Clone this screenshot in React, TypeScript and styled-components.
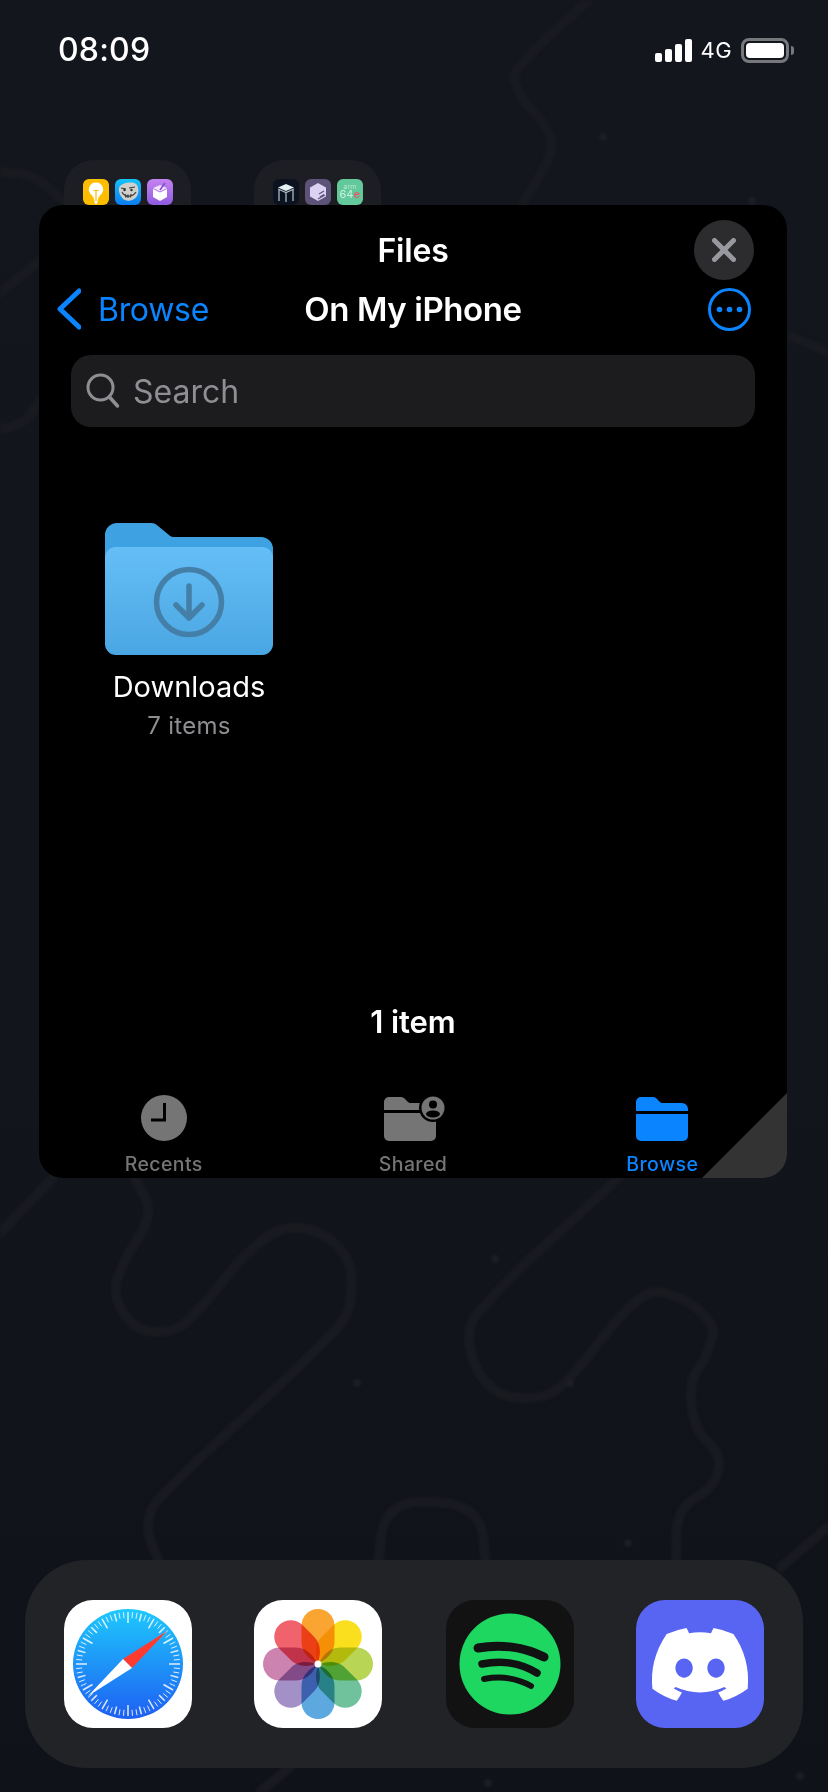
import React from "react";
import styled, { createGlobalStyle } from "styled-components";

const Global = createGlobalStyle`
  html, body { margin: 0; padding: 0; background: #12141b; }
  * { box-sizing: border-box; }
`;

const FONT = `Inter, "Noto Sans", "Liberation Sans", sans-serif`;
const BLUE = "#0a84ff";

const Page = styled.div`
  position: relative;
  width: 828px;
  height: 1792px;
  overflow: hidden;
  display: flex;
  flex-direction: column;
  font-family: ${FONT};
  color: #fff;
  background: linear-gradient(180deg, #14161e 0%, #13151d 60%, #101219 100%);
`;
const WallpaperArt = styled.svg`
  position: absolute;
  inset: 0;
  width: 828px;
  height: 1792px;
  filter: blur(1px);
`;
const StatusBar = styled.div`
  position: relative;
  height: 160px;
  padding: 32px 39px 0 58px;
  display: flex;
  justify-content: space-between;
  align-items: flex-start;
`;
const Time = styled.div`
  font-size: 32px;
  line-height: 36px;
  font-weight: 500;
  letter-spacing: 0.2px;
`;
const StatusRight = styled.div`
  display: flex;
  align-items: center;
  height: 36px;
`;
const Network = styled.span`
  font-size: 22px;
  font-weight: 400;
  margin: 0 9px 0 9px;
  letter-spacing: 0.4px;
`;
const FolderRow = styled.div`
  position: relative;
  height: 45px;
  overflow: hidden;
  padding-left: 64px;
  display: flex;
  gap: 63px;
`;
const HomeFolder = styled.div`
  width: 127px;
  height: 128px;
  border-radius: 30px;
  background: #1c1e23;
  padding: 19px 19px 0;
  display: flex;
  gap: 6px;
  align-items: flex-start;
`;
const MiniIcon = styled.svg`
  width: 26px;
  height: 26px;
  border-radius: 6px;
  flex: none;
`;
const Card = styled.div`
  position: relative;
  margin: 0 41px 0 39px;
  height: 973px;
  background: #000;
  border-radius: 24px;
  overflow: hidden;
  display: flex;
  flex-direction: column;
`;
const TitleRow = styled.div`
  display: grid;
  grid-template-columns: 1fr auto 1fr;
  align-items: center;
  padding: 15px 33px 0;
`;
const Title = styled.div`
  font-size: 32px;
  font-weight: 600;
  letter-spacing: -0.2px;
`;
const CloseButton = styled.div`
  grid-column: 3;
  justify-self: end;
  width: 60px;
  height: 60px;
  border-radius: 50%;
  background: #2c2c2e;
  display: flex;
  align-items: center;
  justify-content: center;
`;
const NavRow = styled.div`
  display: grid;
  grid-template-columns: 1fr auto 1fr;
  align-items: center;
  height: 44px;
  margin-top: 7px;
  padding: 0 36px;
`;
const BackLink = styled.div`
  display: flex;
  align-items: center;
  gap: 17px;
  margin-left: -18px;
  color: ${BLUE};
  font-size: 32px;
  letter-spacing: -0.3px;
`;
const NavTitle = styled.div`
  font-size: 33px;
  font-weight: 600;
  letter-spacing: -0.4px;
`;
const MoreWrap = styled.div`
  justify-self: end;
  display: flex;
`;
const SearchBar = styled.div`
  margin: 24px 32px 0 32px;
  height: 72px;
  border-radius: 20px;
  background: #1c1c1e;
  display: flex;
  align-items: center;
  gap: 13px;
  padding-left: 15px;
  color: #8e8e93;
  font-size: 32px;
`;
const FileItem = styled.div`
  width: 220px;
  margin: 96px 0 0 40px;
  display: flex;
  flex-direction: column;
  align-items: center;
`;
const FileName = styled.div`
  margin-top: 14px;
  font-size: 29px;
  line-height: 36px;
  letter-spacing: 0;
`;
const FileMeta = styled.div`
  margin-top: 5px;
  font-size: 24px;
  line-height: 32px;
  color: #8e8e93;
  letter-spacing: 0.3px;
`;
const ItemCount = styled.div`
  margin-top: auto;
  text-align: center;
  font-size: 31px;
  line-height: 36px;
  font-weight: 600;
  letter-spacing: -0.1px;
`;
const TabBar = styled.div`
  display: grid;
  grid-template-columns: repeat(3, 1fr);
  margin-top: 55px;
  height: 83px;
`;
const Tab = styled.div<{ $active?: boolean }>`
  display: flex;
  flex-direction: column;
  align-items: center;
  color: ${(p) => (p.$active ? BLUE : "#757575")};
`;
const TabIcon = styled.div`
  height: 46px;
  display: flex;
  align-items: center;
  justify-content: center;
`;
const SharedGlyph = styled.svg`
  margin-left: 4px;
`;
const TabLabel = styled.div`
  margin-top: 11px;
  font-size: 19.5px;
  line-height: 24px;
  font-weight: 500;
  letter-spacing: 0.4px;
`;
const ResizeCorner = styled.div`
  position: absolute;
  right: 0;
  bottom: 0;
  width: 85px;
  height: 85px;
  background: #333;
  clip-path: polygon(100% 0, 100% 100%, 0 100%);
`;
const Dock = styled.div`
  position: relative;
  margin: auto 25px 24px;
  height: 208px;
  border-radius: 62px;
  background: #222327;
  display: grid;
  grid-template-columns: 190px 192px 190px 128px;
  align-items: center;
  padding: 0 39px;
`;
const AppIcon = styled.svg`
  width: 128px;
  height: 128px;
  border-radius: 29px;
  flex: none;
`;
const Petal = styled.path`
  mix-blend-mode: multiply;
`;
const Art = styled.g`
  isolation: isolate;
`;
const SignalBars = styled.div`
  display: flex;
  align-items: flex-end;
  gap: 3px;
  height: 23px;
`;
const SignalBar = styled.span<{ $h: number }>`
  width: 7px;
  height: ${(p) => p.$h}px;
  border-radius: 2px;
  background: #fff;
`;
const Battery = styled.div`
  position: relative;
  width: 48px;
  height: 25px;
  border: 3px solid #77787c;
  border-radius: 8px;
  padding: 2px;
  &::after {
    content: "";
    position: absolute;
    right: -8px;
    top: 5px;
    width: 3px;
    height: 9px;
    background: #77787c;
    border-radius: 0 3px 3px 0;
  }
`;
const BatteryFill = styled.div`
  width: 100%;
  height: 100%;
  background: #fff;
  border-radius: 4px;
`;

type P = [number, number];
function smooth(pts: P[]): string {
  const tangent = (a: P, b: P): P => {
    const dx = b[0] - a[0];
    const dy = b[1] - a[1];
    const l = Math.hypot(dx, dy) || 1;
    return [dx / l, dy / l];
  };
  let d = `M${pts[0][0]},${pts[0][1]}`;
  for (let i = 0; i < pts.length - 1; i++) {
    const p0 = pts[Math.max(i - 1, 0)];
    const p1 = pts[i];
    const p2 = pts[i + 1];
    const p3 = pts[Math.min(i + 2, pts.length - 1)];
    const t1 = tangent(p0, p2);
    const t2 = tangent(p1, p3);
    const l = Math.hypot(p2[0] - p1[0], p2[1] - p1[1]) * 0.38;
    d += ` C${p1[0] + t1[0] * l},${p1[1] + t1[1] * l} ${p2[0] - t2[0] * l},${p2[1] - t2[1] * l} ${p2[0]},${p2[1]}`;
  }
  return d;
}

const wallPaths: P[][] = [
  [[589, 0], [528, 57], [515, 83], [549, 133], [549, 157], [523, 203]],
  [[0, 172], [32, 177], [63, 200]],
  [[53, 250], [0, 293]],
  [[0, 430], [25, 420], [40, 400]],
  [[792, 337], [828, 352]],
  [[53, 1178], [0, 1233]],
  [[135, 1178], [148, 1213], [124, 1263], [116, 1293], [132, 1323], [158, 1332], [185, 1323], [259, 1243], [301, 1228], [343, 1253], [351, 1293], [338, 1327], [158, 1500], [148, 1527], [158, 1560]],
  [[618, 1178], [478, 1313], [470, 1347], [491, 1387], [528, 1398], [560, 1387], [634, 1303], [665, 1293], [710, 1323], [707, 1353], [692, 1383], [697, 1427], [718, 1457], [713, 1483], [681, 1513], [676, 1560]],
  [[378, 1560], [391, 1513], [433, 1502], [475, 1517], [486, 1560]],
  [[828, 1527], [781, 1567]],
  [[290, 1767], [260, 1792]],
];
const wallDots: P[] = [[603, 137], [752, 201], [495, 1259], [357, 1383], [570, 1383], [628, 1543], [488, 1783], [800, 1776]];

const Wallpaper = () => (
  <WallpaperArt viewBox="0 0 828 1792">
    <g fill="none" stroke="#181a1f" strokeWidth={10} strokeLinecap="round">
      {wallPaths.map((p, i) => (
        <path key={i} d={smooth(p)} />
      ))}
    </g>
    {wallDots.map(([x, y], i) => (
      <circle key={i} cx={x} cy={y} r={4} fill="#1c1e23" />
    ))}
  </WallpaperArt>
);

const Tips = () => (
  <MiniIcon viewBox="0 0 26 26">
    <rect width="26" height="26" fill="#ffbd00" />
    <path d="M13 3.500a7 7 0 0 1 5 12c-1.500 1.500-2.400 2.500-3 4.500l-1 5h-2l-1-5c-.6-2-1.500-3-3-4.500a7 7 0 0 1 5-12z" fill="#fff" />
    <path d="M10.500 11.500h5M13 11.500V22" stroke="#ffbd00" strokeWidth="1.200" fill="none" />
  </MiniIcon>
);
const Troll = () => (
  <MiniIcon viewBox="0 0 26 26">
    <defs>
      <linearGradient id="tr" x1="0" y1="0" x2="0" y2="1">
        <stop offset="0" stopColor="#14c4fb" />
        <stop offset="1" stopColor="#0a7cf0" />
      </linearGradient>
    </defs>
    <rect width="26" height="26" fill="url(#tr)" />
    <path d="M4 9c1-5 13-7 17-4 3 2 3 9 1 12-2 4-9 6-12 4-3-1-7-7-6-12z" fill="#cfcfcc" />
    <path d="M6 9l5 1M14 9l6-1M7 13c3 6 11 5 14 0M10 15l1 3.500M13 15.500v3.500M16 15l-.5 3.500" stroke="#3c3c3c" strokeWidth="1.200" fill="none" />
    <circle cx="9.500" cy="11" r="1.200" fill="#2c2c2c" />
    <circle cx="16.500" cy="11" r="1.200" fill="#2c2c2c" />
  </MiniIcon>
);
const PurpleBox = () => (
  <MiniIcon viewBox="0 0 26 26">
    <defs>
      <linearGradient id="pb" x1="0" y1="0" x2="0" y2="1">
        <stop offset="0" stopColor="#c583f0" />
        <stop offset="1" stopColor="#8f5be0" />
      </linearGradient>
    </defs>
    <rect width="26" height="26" fill="url(#pb)" />
    <path d="M6 10l7 3.500 7-3.500v8l-7 4-7-4z" fill="#fff" />
    <path d="M6 9l7-3 7 3-7 3.500z" fill="#f1e3fb" />
    <path d="M13 11l5-7" stroke="#7f4dd0" strokeWidth="1.500" />
  </MiniIcon>
);
const TableIcon = () => (
  <MiniIcon viewBox="0 0 26 26">
    <rect width="26" height="26" fill="#0d1220" />
    <path d="M13 5l8 3.500-8 3.500-8-3.500z" fill="#e4f2f5" />
    <path d="M5 10l8 3.500 8-3.500M6 11v11M20 11v11M13 14v9" stroke="#a9bcc4" strokeWidth="1.300" fill="none" />
  </MiniIcon>
);
const HexIcon = () => (
  <MiniIcon viewBox="0 0 26 26">
    <rect width="26" height="26" fill="#5d5278" />
    <path d="M13 4l8 4.500v9L13 22l-8-4.500v-9z" fill="#dcd2f2" />
    <path d="M13 20l7-4M14 15l5-3M15 18l4-2.500" stroke="#5d5278" strokeWidth="1.200" />
  </MiniIcon>
);
const ArmIcon = () => (
  <MiniIcon viewBox="0 0 26 26">
    <rect width="26" height="26" fill="#63c99b" />
    <text x="13" y="9.500" textAnchor="middle" fontSize="7" fill="#b4e8cf" fontFamily="Inter, sans-serif">arm</text>
    <text x="2.500" y="19" fontSize="11" fill="#c8f3e0" fontFamily="Inter, sans-serif">64</text>
    <text x="16.500" y="19" fontSize="11" fontWeight="600" fill="#e8566c" fontFamily="Inter, sans-serif">e</text>
  </MiniIcon>
);

const ticks = Array.from({ length: 72 }, (_, i) => {
  const a = (i * 5 * Math.PI) / 180;
  const inner = i % 6 === 0 ? 41 : i % 3 === 0 ? 44 : 46;
  const s = Math.sin(a);
  const c = Math.cos(a);
  return { x1: 64 + s * inner, y1: 64 - c * inner, x2: 64 + s * 52, y2: 64 - c * 52, w: i % 3 === 0 ? 1.5 : 1 };
});

const Safari = () => (
  <AppIcon viewBox="0 0 128 128">
    <defs>
      <linearGradient id="sf" x1="0" y1="0" x2="0" y2="1">
        <stop offset="0" stopColor="#1ec9fd" />
        <stop offset="1" stopColor="#1e5ff2" />
      </linearGradient>
    </defs>
    <rect width="128" height="128" fill="#fff" />
    <circle cx="64" cy="64" r="55" fill="url(#sf)" />
    {ticks.map((t, i) => (
      <line key={i} x1={t.x1} y1={t.y1} x2={t.x2} y2={t.y2} stroke="#fff" strokeOpacity={0.85} strokeWidth={t.w} />
    ))}
    <path d="M103 31L59 59l9 9z" fill="#ff3b30" />
    <path d="M24 96l35-37 9 9z" fill="#fff" />
  </AppIcon>
);

const petals = [
  { r: 0, c: "#faa431" },
  { r: 45, c: "#f9df1e" },
  { r: 90, c: "#b9d556" },
  { r: 135, c: "#6fc29c" },
  { r: 180, c: "#5da9df" },
  { r: 225, c: "#a390c6" },
  { r: 270, c: "#cd83af" },
  { r: 315, c: "#f0636c" },
];
const Photos = () => (
  <AppIcon viewBox="0 0 128 128">
    <rect width="128" height="128" fill="#fff" />
    <Art>
      {petals.map((p) => (
        <Petal
          key={p.r}
          d="M0,-1 C-6,-3 -16.500,-10 -16.500,-22 V-38.500 A16.500,16.500 0 0 1 16.500,-38.500 V-22 C16.500,-10 6,-3 0,-1 Z"
          fill={p.c}
          transform={`translate(64 64) rotate(${p.r})`}
        />
      ))}
    </Art>
    <circle cx="64" cy="64" r="3.500" fill="#fff" />
  </AppIcon>
);
const Spotify = () => (
  <AppIcon viewBox="0 0 128 128">
    <rect width="128" height="128" fill="#121212" />
    <circle cx="64" cy="64" r="50.500" fill="#1ed760" />
    <g fill="none" stroke="#121212" strokeLinecap="round">
      <path d="M32 48C54 44 78 47 98 57" strokeWidth="9" />
      <path d="M36 64C55 60 75 63 91 73" strokeWidth="7.500" />
      <path d="M38 79C54 76 71 78 85 86" strokeWidth="6" />
    </g>
  </AppIcon>
);
const Discord = () => (
  <AppIcon viewBox="0 0 128 128">
    <rect width="128" height="128" fill="#5865f2" />
    <g transform="translate(16 28) scale(0.756)">
      <path
        fill="#fff"
        d="M107.7,8.07A105.15,105.15,0,0,0,81.47,0a72.06,72.06,0,0,0-3.36,6.83A97.68,97.68,0,0,0,49,6.83,72.37,72.37,0,0,0,45.64,0,105.89,105.89,0,0,0,19.39,8.09C2.79,32.65-1.71,56.6.54,80.21h0A105.73,105.73,0,0,0,32.71,96.36,77.7,77.7,0,0,0,39.6,85.25a68.42,68.42,0,0,1-10.85-5.18c.91-.66,1.8-1.34,2.66-2a75.57,75.57,0,0,0,64.32,0c.87.71,1.76,1.39,2.66,2a68.68,68.68,0,0,1-10.87,5.19,77,77,0,0,0,6.89,11.1A105.25,105.25,0,0,0,126.6,80.22h0C129.24,52.84,122.09,29.11,107.7,8.07ZM42.45,65.69C36.18,65.69,31,60,31,53s5-12.74,11.43-12.74S54,46,53.89,53,48.84,65.69,42.45,65.69Zm42.24,0C78.41,65.69,73.25,60,73.25,53s5-12.74,11.44-12.74S96.23,46,96.12,53,91.08,65.69,84.69,65.69Z"
      />
    </g>
  </AppIcon>
);

const FolderArt = () => (
  <svg width="168" height="132" viewBox="0 0 168 132">
    <defs>
      <linearGradient id="ff" x1="0" y1="0" x2="0" y2="1">
        <stop offset="0" stopColor="#65bef6" />
        <stop offset="1" stopColor="#4aa6e2" />
      </linearGradient>
    </defs>
    <path d="M0 12a12 12 0 0 1 12-12h34c3 0 5 1 7 3l11 9c1.500 1.500 3 2 5 2h87a12 12 0 0 1 12 12v40H0z" fill="#3ea2e2" />
    <rect x="0" y="24" width="168" height="108" rx="11" fill="url(#ff)" />
    <g fill="none" stroke="#447fa8" strokeWidth="5.500" strokeLinecap="round" strokeLinejoin="round">
      <circle cx="84" cy="79" r="32.500" />
      <path d="M84 63V95M71 82L84 95L97 82" />
    </g>
  </svg>
);

export default function App() {
  return (
    <>
      <Global />
      <Page>
        <Wallpaper />
        <StatusBar>
          <Time>08:09</Time>
          <StatusRight>
            <SignalBars>
              <SignalBar $h={9} />
              <SignalBar $h={13} />
              <SignalBar $h={18} />
              <SignalBar $h={23} />
            </SignalBars>
            <Network>4G</Network>
            <Battery>
              <BatteryFill />
            </Battery>
          </StatusRight>
        </StatusBar>
        <FolderRow>
          <HomeFolder>
            <Tips />
            <Troll />
            <PurpleBox />
          </HomeFolder>
          <HomeFolder>
            <TableIcon />
            <HexIcon />
            <ArmIcon />
          </HomeFolder>
        </FolderRow>
        <Card>
          <TitleRow>
            <span />
            <Title>Files</Title>
            <CloseButton>
              <svg width="24" height="24" viewBox="0 0 24 24">
                <path d="M2.500 2.500L21.500 21.500M21.500 2.500L2.500 21.500" stroke="#98989f" strokeWidth="5" strokeLinecap="round" />
              </svg>
            </CloseButton>
          </TitleRow>
          <NavRow>
            <BackLink>
              <svg width="24" height="42" viewBox="0 0 24 42">
                <path d="M22 3L3 21L22 39" fill="none" stroke={BLUE} strokeWidth="5" strokeLinecap="round" strokeLinejoin="round" />
              </svg>
              Browse
            </BackLink>
            <NavTitle>On My iPhone</NavTitle>
            <MoreWrap>
              <svg width="43" height="43" viewBox="0 0 43 43">
                <circle cx="21.500" cy="21.500" r="20" fill="none" stroke={BLUE} strokeWidth="3" />
                <circle cx="11.500" cy="21.500" r="2.800" fill={BLUE} />
                <circle cx="21.500" cy="21.500" r="2.800" fill={BLUE} />
                <circle cx="31.500" cy="21.500" r="2.800" fill={BLUE} />
              </svg>
            </MoreWrap>
          </NavRow>
          <SearchBar>
            <svg width="34" height="36" viewBox="0 0 34 36">
              <circle cx="14.500" cy="14.500" r="12.500" fill="none" stroke="#8e8e93" strokeWidth="3" />
              <path d="M23.500 24L31.500 33" stroke="#8e8e93" strokeWidth="3.500" strokeLinecap="round" />
            </svg>
            Search
          </SearchBar>
          <FileItem>
            <FolderArt />
            <FileName>Downloads</FileName>
            <FileMeta>7 items</FileMeta>
          </FileItem>
          <ItemCount>1 item</ItemCount>
          <TabBar>
            <Tab>
              <TabIcon>
                <svg width="46" height="46" viewBox="0 0 46 46">
                  <circle cx="23" cy="23" r="23" fill="#757575" />
                  <path d="M23.500 8V25H10" fill="none" stroke="#000" strokeWidth="3" />
                </svg>
              </TabIcon>
              <TabLabel>Recents</TabLabel>
            </Tab>
            <Tab>
              <TabIcon>
                <SharedGlyph width="64" height="46" viewBox="0 0 64 46">
                  <path d="M1 7a5 5 0 0 1 5-5h12c2 0 3 1 4 2l3 3c1 1 2 1 3 1h19a6 6 0 0 1 6 6v1H1z" fill="#757575" />
                  <path d="M1 18h52v23a5 5 0 0 1-5 5H6a5 5 0 0 1-5-5z" fill="#757575" />
                  <circle cx="50" cy="13" r="14" fill="#000" />
                  <circle cx="50" cy="13" r="11.500" fill="#757575" />
                  <circle cx="50" cy="9.500" r="4" fill="#000" />
                  <ellipse cx="50" cy="19" rx="7" ry="3.500" fill="#000" />
                </SharedGlyph>
              </TabIcon>
              <TabLabel>Shared</TabLabel>
            </Tab>
            <Tab $active>
              <TabIcon>
                <svg width="52" height="46" viewBox="0 0 52 46">
                  <path d="M0 7a5 5 0 0 1 5-5h12c2 0 3 1 4 2l3 3c1 1 2 1 3 1h19a6 6 0 0 1 6 6v2H0z" fill={BLUE} />
                  <path d="M0 19h52v22a5 5 0 0 1-5 5H5a5 5 0 0 1-5-5z" fill={BLUE} />
                </svg>
              </TabIcon>
              <TabLabel>Browse</TabLabel>
            </Tab>
          </TabBar>
          <ResizeCorner />
        </Card>
        <Dock>
          <Safari />
          <Photos />
          <Spotify />
          <Discord />
        </Dock>
      </Page>
    </>
  );
}
